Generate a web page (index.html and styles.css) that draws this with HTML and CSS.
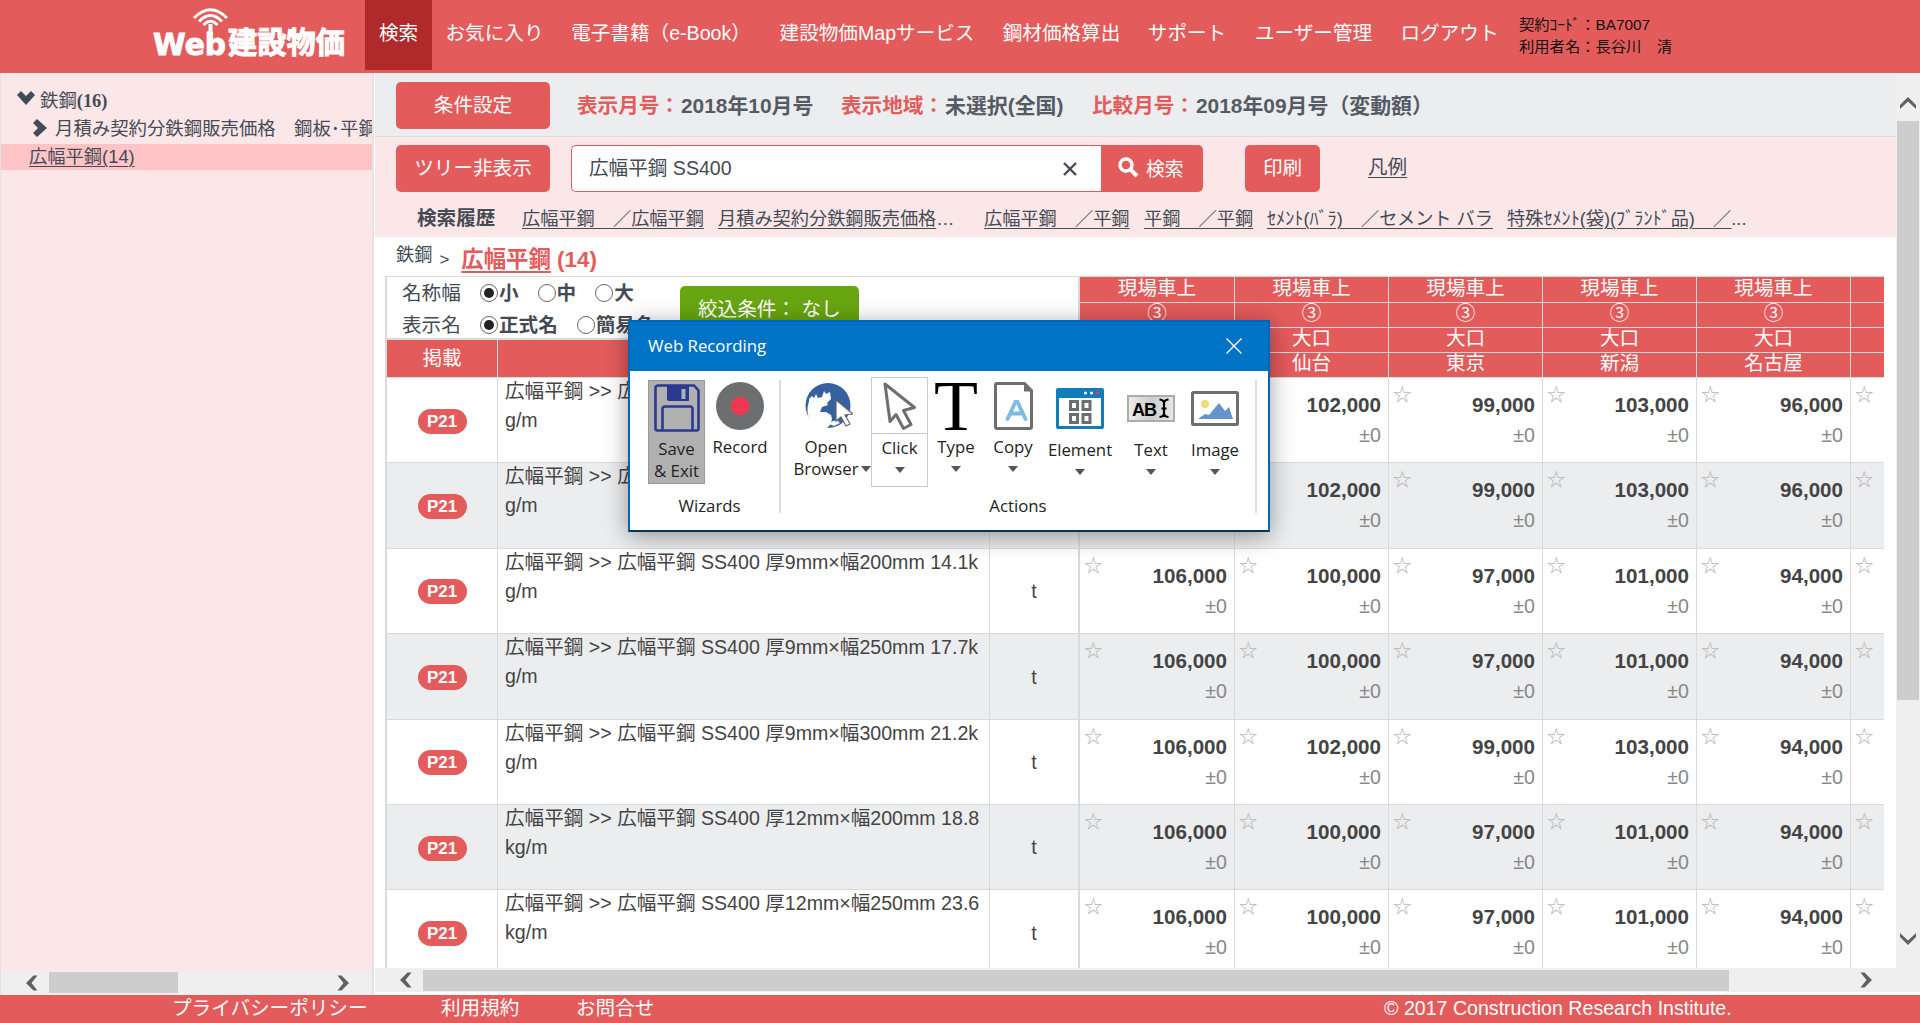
FILE: index.html
```html
<!DOCTYPE html>
<html lang="ja">
<head>
<meta charset="utf-8">
<title>Web建設物価</title>
<link rel="stylesheet" href="styles.css">
</head>
<body>
<svg class="defs" width="0" height="0">
  <symbol id="left" viewBox="0 0 14 16"><path d="M12.500 0.500H8.500L1 8l7.500 7.500h4L6.500 8z" fill="#606060"/></symbol>
  <symbol id="right" viewBox="0 0 14 16"><path d="M1.500 0.500H5.500L13 8l-7.500 7.500h-4L7.500 8z" fill="#606060"/></symbol>
  <symbol id="up" viewBox="0 0 18 12"><path d="M1 12V8L9 0l8 8v4L9 4.500z" fill="#606060"/></symbol>
  <symbol id="down" viewBox="0 0 18 12"><path d="M1 0v4l8 8 8-8V0L9 7.500z" fill="#606060"/></symbol>
</svg>
<header class="header">
  <svg class="logo" width="205" height="65" viewBox="0 0 205 65">
    <g fill="none" stroke="#fff" stroke-width="3">
      <path d="M49 18Q65.500 1.500 82 18"/><path d="M54 21.500Q65.500 9.500 77 21.500"/><path d="M58.500 25Q65.500 17.500 72.500 25"/>
    </g>
    <path d="M63.500 24h4v12h-4z" fill="#fff"/>
    <text class="logo-latin" x="8" y="55" textLength="73" lengthAdjust="spacingAndGlyphs">Web</text>
    <text class="logo-kanji" x="83" y="53" textLength="117" lengthAdjust="spacingAndGlyphs">建設物価</text>
  </svg>
  <nav class="nav">
    <a class="on">検索</a><a>お気に入り</a><a>電子書籍（e-Book）</a><a>建設物価Mapサービス</a><a>鋼材価格算出</a><a>サポート</a><a>ユーザー管理</a><a>ログアウト</a>
  </nav>
  <div class="user">契約ｺｰﾄﾞ：BA7007<br>利用者名：長谷川　清</div>
</header>

<div class="middle">
  <aside class="side">
    <div class="tree">
      <div class="node n1"><svg width="18" height="14" viewBox="0 0 18 14"><path d="M0 4l4-4 5 5 5-5 4 4-9 10z" fill="#444b55"/></svg><span>鉄鋼<b>(16)</b></span></div>
      <div class="node n2"><svg width="14" height="18" viewBox="0 0 14 18"><path d="M4 0L0 4l5 5-5 5 4 4L14 9z" fill="#444b55"/></svg><span>月積み契約分鉄鋼販売価格　鋼板･平鋼</span></div>
      <div class="node n3"><a>広幅平鋼(14)</a></div>
    </div>
    <div class="hbar side-bar"><svg width="14" height="16"><use href="#left"/></svg><div class="track"><div class="thumb"></div></div><svg width="14" height="16"><use href="#right"/></svg></div>
  </aside>

  <div class="main">
    <div class="content">
      <section class="cond">
        <a class="btn">条件設定</a>
        <div class="c c1"><em>表示月号：</em><span>2018年10月号</span></div>
        <div class="c c2"><em>表示地域：</em><span>未選択(全国)</span></div>
        <div class="c c3"><em>比較月号：</em><span>2018年09月号（変動額）</span></div>
      </section>
      <section class="search">
        <div class="line">
          <a class="btn">ツリー非表示</a>
          <div class="field"><span>広幅平鋼 SS400</span><svg width="14" height="14" viewBox="0 0 14 14"><path d="M1 1l12 12M13 1L1 13" stroke="#444b55" stroke-width="2.400"/></svg></div>
          <a class="go"><svg width="21" height="21" viewBox="0 0 21 21"><circle cx="8" cy="8" r="6" fill="none" stroke="#fff" stroke-width="3.400"/><path d="M12.500 12.500l6.500 6.500" stroke="#fff" stroke-width="4"/></svg><span>検索</span></a>
          <a class="btn print">印刷</a>
          <a class="legend">凡例</a>
        </div>
        <div class="history"><b>検索履歴</b>
          <span class="h1"><a>広幅平鋼　／広幅平鋼</a></span><span class="h2"><a>月積み契約分鉄鋼販売価格</a>…</span><span class="h3"><a>広幅平鋼　／平鋼</a></span><span class="h4"><a>平鋼　／平鋼</a></span><span class="h5"><a>ｾﾒﾝﾄ(ﾊﾞﾗ)　／セメント バラ</a></span><span class="h6"><a>特殊ｾﾒﾝﾄ(袋)(ﾌﾞﾗﾝﾄﾞ品)　／</a>...</span>
        </div>
      </section>
      <div class="crumbs"><span>鉄鋼</span><i>&gt;</i><b><u>広幅平鋼</u> (14)</b></div>
      <div class="table">
        <div class="head">
          <div class="head-left">
            <div class="filter">
              <div class="opts">
                <div><span class="lab">名称幅</span><i class="radio sel"></i><b>小</b><i class="radio g"></i><b>中</b><i class="radio g"></i><b>大</b></div>
                <div><span class="lab">表示名</span><i class="radio sel"></i><b>正式名</b><i class="radio g"></i><b>簡易名</b></div>
              </div>
              <a class="narrow">絞込条件： なし</a>
            </div>
            <div class="titles"><span>掲載</span><span></span><span></span></div>
          </div>
          <div class="head-col"><span>現場車上</span><span>③</span><span>大口</span><span>札幌</span></div>
          <div class="head-col"><span>現場車上</span><span>③</span><span>大口</span><span>仙台</span></div>
          <div class="head-col"><span>現場車上</span><span>③</span><span>大口</span><span>東京</span></div>
          <div class="head-col"><span>現場車上</span><span>③</span><span>大口</span><span>新潟</span></div>
          <div class="head-col"><span>現場車上</span><span>③</span><span>大口</span><span>名古屋</span></div>
          <div class="head-col"><span></span><span></span><span></span><span></span></div>
        </div>
        <div class="row"><div class="pg"><b>P21</b></div><div class="name">広幅平鋼 &gt;&gt; 広幅平鋼 SS400 厚6mm×幅200mm 9.42k<br>g/m</div><div class="unit">t</div><div class="p"><b>108,000</b><i>±0</i></div><div class="p"><b>102,000</b><i>±0</i></div><div class="p"><b>99,000</b><i>±0</i></div><div class="p"><b>103,000</b><i>±0</i></div><div class="p"><b>96,000</b><i>±0</i></div><div class="p"></div></div>
        <div class="row"><div class="pg"><b>P21</b></div><div class="name">広幅平鋼 &gt;&gt; 広幅平鋼 SS400 厚6mm×幅250mm 11.8k<br>g/m</div><div class="unit">t</div><div class="p"><b>108,000</b><i>±0</i></div><div class="p"><b>102,000</b><i>±0</i></div><div class="p"><b>99,000</b><i>±0</i></div><div class="p"><b>103,000</b><i>±0</i></div><div class="p"><b>96,000</b><i>±0</i></div><div class="p"></div></div>
        <div class="row"><div class="pg"><b>P21</b></div><div class="name">広幅平鋼 &gt;&gt; 広幅平鋼 SS400 厚9mm×幅200mm 14.1k<br>g/m</div><div class="unit">t</div><div class="p"><b>106,000</b><i>±0</i></div><div class="p"><b>100,000</b><i>±0</i></div><div class="p"><b>97,000</b><i>±0</i></div><div class="p"><b>101,000</b><i>±0</i></div><div class="p"><b>94,000</b><i>±0</i></div><div class="p"></div></div>
        <div class="row"><div class="pg"><b>P21</b></div><div class="name">広幅平鋼 &gt;&gt; 広幅平鋼 SS400 厚9mm×幅250mm 17.7k<br>g/m</div><div class="unit">t</div><div class="p"><b>106,000</b><i>±0</i></div><div class="p"><b>100,000</b><i>±0</i></div><div class="p"><b>97,000</b><i>±0</i></div><div class="p"><b>101,000</b><i>±0</i></div><div class="p"><b>94,000</b><i>±0</i></div><div class="p"></div></div>
        <div class="row"><div class="pg"><b>P21</b></div><div class="name">広幅平鋼 &gt;&gt; 広幅平鋼 SS400 厚9mm×幅300mm 21.2k<br>g/m</div><div class="unit">t</div><div class="p"><b>106,000</b><i>±0</i></div><div class="p"><b>102,000</b><i>±0</i></div><div class="p"><b>99,000</b><i>±0</i></div><div class="p"><b>103,000</b><i>±0</i></div><div class="p"><b>94,000</b><i>±0</i></div><div class="p"></div></div>
        <div class="row"><div class="pg"><b>P21</b></div><div class="name">広幅平鋼 &gt;&gt; 広幅平鋼 SS400 厚12mm×幅200mm 18.8<br>kg/m</div><div class="unit">t</div><div class="p"><b>106,000</b><i>±0</i></div><div class="p"><b>100,000</b><i>±0</i></div><div class="p"><b>97,000</b><i>±0</i></div><div class="p"><b>101,000</b><i>±0</i></div><div class="p"><b>94,000</b><i>±0</i></div><div class="p"></div></div>
        <div class="row"><div class="pg"><b>P21</b></div><div class="name">広幅平鋼 &gt;&gt; 広幅平鋼 SS400 厚12mm×幅250mm 23.6<br>kg/m</div><div class="unit">t</div><div class="p"><b>106,000</b><i>±0</i></div><div class="p"><b>100,000</b><i>±0</i></div><div class="p"><b>97,000</b><i>±0</i></div><div class="p"><b>101,000</b><i>±0</i></div><div class="p"><b>94,000</b><i>±0</i></div><div class="p"></div></div>
      </div>
    </div>
    <div class="vbar"><svg width="18" height="12"><use href="#up"/></svg><div class="vthumb"></div><svg width="18" height="12"><use href="#down"/></svg></div>
    <div class="hbar main-bar"><svg width="14" height="16"><use href="#left"/></svg><div class="track"><div class="thumb"></div></div><svg width="14" height="16"><use href="#right"/></svg></div>
  </div>
</div>

<footer class="footer"><a>プライバシーポリシー</a><a>利用規約</a><a>お問合せ</a><span>© 2017 Construction Research Institute.</span></footer>

<div class="dialog">
  <div class="bar"><span>Web Recording</span><svg width="16" height="16" viewBox="0 0 16 16"><path d="M0.500 0.500l15 15M15.500 0.500l-15 15" stroke="#fff" stroke-width="1.400"/></svg></div>
  <div class="ribbon">
    <div class="group wiz">
      <div class="tools">
        <div class="tool save">
          <svg width="46" height="48" viewBox="0 0 46 48"><path d="M1.500 4Q1.500 1.500 4 1.500h36l4.500 5v38q0 2-2 2h-39q-2 0-2-2z" fill="none" stroke="#2b3990" stroke-width="2.600"/><path d="M13 2h22v15H15q-2 0-2-2z" fill="#2b3990"/><path d="M27.500 5h4v10h-4z" fill="#b0b0b0"/><path d="M8.500 46V25q0-2.500 2.500-2.500h25q2.500 0 2.500 2.500v21" fill="none" stroke="#2b3990" stroke-width="2.600"/></svg>
          <span>Save<br>&amp; Exit</span>
        </div>
        <div class="tool rec"><svg width="48" height="48" viewBox="0 0 48 48"><circle cx="24" cy="24" r="24" fill="#6d6e70"/><circle cx="24" cy="24" r="9.200" fill="#ef3951"/></svg><span>Record</span></div>
      </div>
      <div class="cap">Wizards</div>
    </div>
    <div class="group act">
      <div class="tools">
        <div class="tool open">
          <svg width="48" height="48" viewBox="0 0 48 48"><circle cx="23" cy="23.500" r="22.500" fill="#3660a0"/><path d="M4 17l3-3 2 2 2-4 2 4 4-1 2-6 2 3 4-2 1 7-4 4 1 2-6 2-2 5 6 0 5 3 1 4-2 6-5 5q-9-1-14-8-6-9-2-21z" fill="#fff"/><path d="M22 41l10-3 3 3-6 3z" fill="#fff"/><path d="M31 18v21l5-4 5 9 4-2-5-9 8-1z" fill="#fff" stroke="#666" stroke-width="1.200"/></svg>
          <span>Open<br>Browser<i class="car side-car"></i></span>
        </div>
        <div class="tool click"><div class="pic"><svg width="34" height="48" viewBox="0 0 34 48"><path d="M2 2l29.500 23.500-11 3 7.500 14-7.500 4-7.500-14-6 7z" fill="#fff" stroke="#6d6e70" stroke-width="3" stroke-linejoin="round"/></svg></div><span>Click</span><i class="car"></i></div>
        <div class="tool type"><div class="bigt">T</div><span>Type</span><i class="car"></i></div>
        <div class="tool copy"><svg width="39" height="48" viewBox="0 0 39 48"><path d="M1.500 3q0-1.500 1.500-1.500h27.500l7 7V45q0 1.500-1.500 1.500H3q-1.500 0-1.500-1.500z" fill="#fff" stroke="#6d6e70" stroke-width="3"/><path d="M30 1v8.500h8z" fill="#6d6e70"/><path d="M13.500 37l8-17h2l8 17M16.500 31.500h12" fill="none" stroke="#7bbde4" stroke-width="3.800" stroke-linecap="round"/></svg><span>Copy</span><i class="car"></i></div>
        <div class="tool elem"><svg width="48" height="41" viewBox="0 0 48 41"><rect width="48" height="41" rx="2" fill="#107cba"/><path d="M3 10h42v28H3z" fill="#fff"/><circle cx="29.500" cy="5" r="1.500" fill="#fff"/><circle cx="35.500" cy="5" r="1.500" fill="#fff"/><circle cx="41.500" cy="5" r="1.700" fill="#ef3951"/><path d="M14.500 13.500h7v8h-7zM27 13.500h7v8h-7zM14.500 26.500h7v8h-7zM27 26.500h7v8h-7z" fill="none" stroke="#6d6e70" stroke-width="3"/></svg><span>Element</span><i class="car"></i></div>
        <div class="tool text"><svg width="48" height="27" viewBox="0 0 48 27"><defs><linearGradient id="metal"><stop offset="0" stop-color="#eee"/><stop offset=".5" stop-color="#ccc"/><stop offset="1" stop-color="#e8e8e8"/></linearGradient></defs><rect x="1" y="1" width="46" height="25" fill="url(#metal)" stroke="#acaea4" stroke-width="2"/><text class="abi" x="5" y="20.500" textLength="25">AB</text><path d="M32.500 4.500q3.500 0 4.500 3v11.500q-1 3-4.500 3M41.500 4.500q-3.500 0-4.500 3v11.500q1 3 4.500 3M34.500 13.500h5" fill="none" stroke="#000" stroke-width="2.200"/></svg><span>Text</span><i class="car"></i></div>
        <div class="tool image"><svg width="48" height="35" viewBox="0 0 48 35"><rect x="1.500" y="1.500" width="45" height="32" rx="1" fill="#fff" stroke="#6d6e70" stroke-width="3"/><circle cx="14" cy="13" r="4" fill="#f1da7a"/><path d="M7 28l7-5 4 1 10-12 6 8 4-4 4 12z" fill="#6693ce"/></svg><span>Image</span><i class="car"></i></div>
      </div>
      <div class="cap">Actions</div>
    </div>
  </div>
</div>
</body>
</html>
```
FILE: styles.css
```css
* { box-sizing: border-box; }
body {
  margin: 0; width: 1920px; height: 1023px; overflow: hidden; position: relative;
  display: grid; grid-template-rows: 73px 922px 28px;
  font: 19.6px/1 "Liberation Sans", "Noto Sans CJK JP", sans-serif; color: #444b55;
  white-space: nowrap; background: #fff;
}
.defs { position: absolute; }
svg { display: block; flex: none; }
i, em { font-style: normal; }

.header { background: #e45b5b; display: flex; padding-left: 145px; }
.logo { width: 205px; margin-right: 15px; }
.logo text { fill: #fff; font-weight: bold; stroke: #fff; stroke-width: 1px; }
.logo-latin { font-family: "DejaVu Sans", sans-serif; font-size: 31px; }
.logo-kanji { font-family: "Noto Sans CJK JP", sans-serif; font-size: 30px; }
.nav { display: grid; grid-template-columns: 67px 125px 208px 224px 145px 106px 147px 125px; height: 70px; }
.nav a { color: #fff; display: flex; justify-content: center; align-items: center; padding-bottom: 2px; }
.nav .on { background: #b02a2c; }
.user { color: #111; font-size: 15.300px; line-height: 22px; padding: 14px 0 0 7px; }

.middle { display: grid; grid-template-columns: 375px 1545px; }
.side { background: #fbe6e8; border-left: 1px solid #e2e2e4; border-right: 2px solid #e6e2e5; display: grid; grid-template-rows: 898px 24px; width: 374px; }
.tree { padding-top: 14px; overflow: hidden; }
.node { display: flex; font-size: 18.400px; font-family: "Liberation Serif", "Noto Sans CJK JP", serif; }
.node.n1 { padding-left: 16px; height: 28px; align-items: center; gap: 5px; }
.node.n1 span { padding-top: 1px; }
.node.n1 svg { margin-bottom: 7px; }
.node.n2 { padding-left: 32px; height: 29px; align-items: center; gap: 8px; }
.node.n2 svg { margin-bottom: 4px; }
.node.n3 { background: #ffc4c6; height: 26px; padding-left: 28px; align-items: center; font-family: "Liberation Sans", "Noto Sans CJK JP", sans-serif; font-size: 18.300px; }
.node a, .legend, .history a { text-decoration: underline; text-decoration-thickness: 1px; text-underline-offset: 3px; }

.hbar { background: #efefef; display: flex; align-items: center; }
.track { flex: 1; align-self: stretch; display: flex; align-items: center; }
.thumb { background: #cdcdcd; height: 21px; }
.side-bar { padding: 0 22px 1px 24px; }
.side-bar .track { padding: 0 0 0 10px; }
.side-bar .thumb { width: 129px; }

.main { display: grid; grid-template: 895px 24px / 1521px 24px; }
.content { overflow: hidden; display: grid; grid-template-rows: 64px 100px 39px 1fr; }
.vbar { background: #efefef; grid-row: 1 / 3; grid-column: 2; display: flex; flex-direction: column; align-items: center; padding: 24px 0 47px; }
.vthumb { width: 22px; height: 579px; margin: 12px 0 auto; background: #cdcdcd; }
.main-bar { padding: 0 23px 0 24px; }
.main-bar .track { padding-left: 10px; }
.main-bar .thumb { width: 1306px; }

.btn { background: #e45b5b; color: #fff; border-radius: 5px; width: 154px; height: 47px; display: flex; align-items: center; justify-content: center; }
.cond { background: #ecedef; border-bottom: 1px solid #dcdcde; display: flex; align-items: center; padding: 2px 0 0 21px; font-weight: bold; font-size: 20.600px; color: #555b65; }
.cond .btn { font-weight: normal; font-size: 19.600px; }
.cond em { color: #e45b5b; width: 104px; }
.c { display: flex; margin-top: 2px; }
.c1 { margin-left: 27px; width: 264px; }
.c2 { width: 251px; }
.c span { font-size: 20.900px; }

.search { background: #fbe6e8; padding: 8px 0 0 21px; }
.line { display: flex; height: 47px; }
.field { margin-left: 21px; width: 530px; border: 1px solid #e45b5b; border-right: 0; border-radius: 5px 0 0 5px; background: #fff; display: flex; align-items: center; justify-content: space-between; padding: 0 24px 0 17px; }
.field svg { margin-top: 1px; }
.go { width: 102px; background: #e45b5b; border-radius: 0 5px 5px 0; color: #fff; display: flex; align-items: center; gap: 7px; padding-left: 17px; font-size: 18.800px; }
.go svg { margin-bottom: 3px; }
.go span { padding-top: 4px; }
.print { width: 75px; margin: 0 48px 0 42px; }
.legend { margin-top: 13px; }
.history { display: flex; height: 45px; padding: 9px 0 0 21px; align-items: center; font-size: 18.200px; }
.history b { font-size: 19.600px; width: 105px; }
.h1 { width: 196px; } .h2 { width: 266px; } .h3 { width: 160px; } .h4 { width: 123px; } .h5 { width: 240px; }

.crumbs { display: flex; align-items: center; padding-left: 21px; font-size: 18.200px; }
.crumbs span { margin-bottom: 2px; }
.crumbs i { margin: 6px 12px 0 7px; font-size: 17px; }
.crumbs b { color: #e45b5b; font-size: 22.400px; margin-top: 7px; }
.crumbs u { text-decoration-thickness: 1.500px; text-underline-offset: 4px; }

.table { margin-left: 10px; width: 1499px; color: #444; border-left: 2px solid #d9dadc; }
.head { display: grid; grid-template-columns: 693px 155px 154px 154px 154px 154px 33px; height: 102px; border-top: 1px solid #d9dadc; }
.head-left { border-right: 2px solid #d9dadc; }
.filter { display: flex; height: 63px; border-bottom: 2px solid #d9dadc; overflow: hidden; color: #444b55; }
.opts { width: 293px; padding-left: 15px; }
.opts div { height: 32px; display: flex; align-items: center; }
.opts .lab { width: 78px; padding-top: 1px; }
.opts b { font-size: 19.600px; padding-top: 1px; }
.radio { width: 18px; height: 18px; border: 1.500px solid #666; border-radius: 50%; background: #fff; margin-right: 1px; display: grid; place-items: center; }
.radio.sel::after { content: ""; width: 10px; height: 10px; border-radius: 50%; background: #222; }
.radio.g { margin-left: 19px; }
.narrow { background: #68a611; color: #fff; width: 179px; height: 50px; margin-top: 9px; border-radius: 5px; padding: 14px 0 0 18px; }
.titles { display: grid; grid-template-columns: 111px 492px 88px; height: 38px; }
.titles span, .head-col span { background: #e45b5b; color: #fff; border-right: 1px solid #d9dadc; border-bottom: 1px solid #d9dadc; display: flex; align-items: center; justify-content: center; }
.head-col { display: grid; grid-template-rows: 26px 25px 25px 25px; }
.head-col span { padding-bottom: 2px; }
.row { display: grid; grid-template-columns: 111px 492px 90px 155px 154px 154px 154px 154px 33px; height: 85.400px; }
.row:nth-child(odd) { background: #ecedef; }
.row > div { border-right: 1px solid #d9dadc; border-bottom: 1px solid #d9dadc; }
.row > .unit { border-right-width: 2px; padding-top: 2px; }
.row > div:last-child, .head-col:last-child span { border-right: 0; }
.pg, .unit { display: flex; align-items: center; justify-content: center; }
.pg b { background: #e45b5b; color: #fff; width: 49px; height: 25px; border-radius: 13px; font-size: 17px; text-align: center; line-height: 25px; margin-top: 2px; }
.row > .name { line-height: 29px; padding-left: 7px; margin-top: -1px; }
.p { position: relative; padding: 12px 7px 0 0; text-align: right; line-height: 30px; display: flex; flex-direction: column; }
.p b { font-size: 20.600px; }
.p i { color: #888; }
.p::before { content: "☆"; position: absolute; left: 4px; top: 6px; font: 18.500px/18px "Noto Sans CJK JP", sans-serif; color: #b4b4b4; }

.footer { background: #e45b5b; color: #fff; display: flex; padding: 4px 0 0 172px; }
.footer a:nth-child(1) { width: 269px; }
.footer a:nth-child(2) { width: 135px; }
.footer a:nth-child(3) { width: 808px; }

.dialog { position: absolute; left: 628px; top: 320px; width: 642px; height: 212px; border: 2px solid #0067b8; border-bottom: 2px solid #02365f; background: #fff; box-shadow: 0 4px 22px rgba(0,0,0,.38); font-family: "Open Sans", "Noto Sans", sans-serif; font-size: 16.800px; color: #222; }
.bar { background: #0173c7; height: 49px; color: #fff; display: flex; align-items: center; justify-content: space-between; padding: 0 26px 0 18px; }
.bar svg { margin-bottom: 2px; }
.ribbon { display: flex; padding: 9px 0 0 18px; }
.group { height: 133px; border-right: 2px solid #dcdddd; display: flex; flex-direction: column; }
.wiz { width: 133px; }
.act { width: 476px; }
.cap { text-align: center; padding-right: 8px; margin-top: auto; height: 18px; line-height: 18px; margin-bottom: -2px; }
.act .cap { padding-right: 0; }
.tools { display: flex; align-items: flex-start; }
.tool { display: flex; flex-direction: column; align-items: center; text-align: center; line-height: 22px; padding-top: 2px; }
.tool > span { margin-top: 6px; }
.save { width: 57px; height: 104px; background: #b0b0b0; border: 1px solid #999; padding-top: 3px; }
.rec { width: 70px; }
.car { border: 5px solid transparent; border-top: 6px solid #555; border-bottom: 0; margin-top: 8px; width: 0; height: 0; }
.open { width: 90px; }
.open > svg { margin-left: 6px; }
.open > span { position: relative; }
.side-car { position: absolute; right: -12px; bottom: 8px; margin: 0; }
.click { width: 57px; height: 110px; border: 1px solid #ccc; margin-top: -3px; padding-top: 4px; }
.click .pic { border-bottom: 1px solid #ccc; width: 100%; height: 52px; display: flex; justify-content: center; }
.click > span { margin-top: 3px; }
.type { width: 56px; }
.bigt { height: 48px; line-height: 48px; font-family: "Liberation Serif", serif; font-size: 72px; color: #000; }
.copy { width: 58px; }
.elem { width: 76px; padding-top: 8px; }
.elem > span { margin-top: 10px; }
.text { width: 66px; padding-top: 15px; }
.text > span { margin-top: 17px; }
.image { width: 62px; padding-top: 11px; }
.image > span { margin-top: 13px; }
.abi { font: bold 18px "Liberation Sans", sans-serif; fill: #000; }
```
